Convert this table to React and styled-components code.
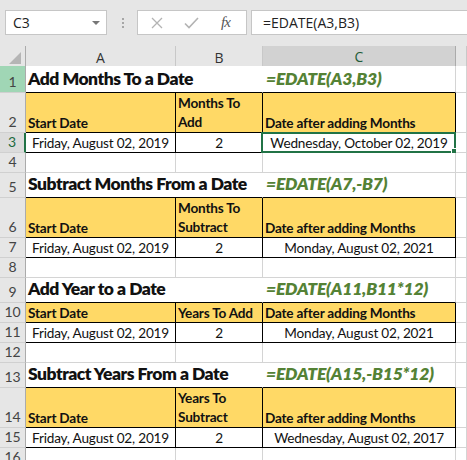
import React from 'react';
import styled, { createGlobalStyle } from 'styled-components';

const GlobalStyle = createGlobalStyle`
  html, body {
    margin: 0;
    padding: 0;
    background: #ffffff;
    overflow: hidden;
  }
`

const CELL_FONT = `Lato, "Open Sans", "Liberation Sans", sans-serif`;
const UI_FONT = `"Open Sans", "Noto Sans", "Liberation Sans", sans-serif`;
const GRID = '#d4d4d4';
const GREEN = '#217346';
const COLS = '26px 150px 87px 193px 1fr';

const Window = styled.div`
  width: 467px;
  height: 460px;
  overflow: hidden;
  background: #ffffff;
`

// formula bar
const Toolbar = styled.div`
  display: flex;
  align-items: center;
  height: 46px;
  padding-left: 5px;
  background: #e6e6e6;
  box-sizing: border-box;
  padding-bottom: 11px;
  padding-top: 10px;
`
const NameBox = styled.div`
  display: flex;
  align-items: center;
  justify-content: space-between;
  width: 102px;
  height: 25px;
  box-sizing: border-box;
  padding: 0 6px 0 7px;
  background: #fff;
  border: 1px solid #c6c6c6;
  font: 14px ${UI_FONT};
  color: #222;
`
const DropArrow = styled.span`
  width: 0;
  height: 0;
  border-left: 4px solid transparent;
  border-right: 4px solid transparent;
  border-top: 4px solid #777;
`
const Dots = styled.div`
  display: flex;
  flex-direction: column;
  gap: 2px;
  margin: 0 13px 0 15px;
  span {
    width: 2px;
    height: 2px;
    background: #a6a6a6;
  }
`
const ButtonBox = styled.div`
  display: flex;
  align-items: center;
  width: 110px;
  height: 25px;
  box-sizing: border-box;
  padding-left: 13px;
  gap: 21px;
  background: #fff;
  border: 1px solid #c6c6c6;
`
const Fx = styled.span`
  font: italic 15px "Liberation Serif", serif;
  color: #555;
  margin-left: 1px;
  letter-spacing: -1px;
`
const FormulaBox = styled.div`
  flex: 1;
  height: 25px;
  margin-left: 4px;
  box-sizing: border-box;
  padding-left: 11px;
  display: flex;
  align-items: center;
  background: #fff;
  border: 1px solid #c6c6c6;
  border-right: none;
  font: 14px ${UI_FONT};
  color: #222;
`

// sheet
const Row = styled.div`
  display: grid;
  grid-template-columns: ${COLS};
  height: ${p => p.$h}px;
`
const ColHead = styled.div`
  display: flex;
  align-items: center;
  justify-content: center;
  box-sizing: border-box;
  background: ${p => (p.$active ? '#d2d2d2' : '#e6e6e6')};
  border-right: 1px solid ${p => (p.$active ? '#ababab' : '#c8c8c8')};
  border-bottom: ${p => (p.$active ? `2px solid ${GREEN}` : '1px solid #ababab')};
  font: 14px ${UI_FONT};
  color: ${p => (p.$active ? '#1e5c38' : '#333')};
  padding-top: 1px;
`
const Corner = styled.div`
  display: flex;
  align-items: flex-end;
  justify-content: flex-end;
  box-sizing: border-box;
  padding: 0 4px 3px 0;
  background: #e6e6e6;
  border-right: 1px solid #ababab;
  border-bottom: 1px solid #ababab;
`
const RowHead = styled.div`
  display: flex;
  align-items: flex-end;
  justify-content: center;
  box-sizing: border-box;
  background: ${p => (p.$state === 'green' ? '#a0d6b5' : p.$state === 'active' ? '#dcdcdc' : '#e6e6e6')};
  border-right: ${p => (p.$state === 'active' ? `2px solid ${GREEN}` : '1px solid #ababab')};
  border-bottom: 1px solid #d0d0d0;
  font: 14px/18px ${CELL_FONT};
  color: ${p => (p.$state === 'active' ? '#1e6b3f' : '#444')};
  padding-bottom: 1px;
`
const Cell = styled.div`
  position: relative;
  display: flex;
  flex-direction: column;
  justify-content: flex-end;
  align-items: ${p => p.$align || 'flex-start'};
  grid-column: ${p => (p.$span ? `span ${p.$span}` : 'auto')};
  box-sizing: border-box;
  min-width: 0;
  white-space: nowrap;
  padding: 0 2px;
  background: ${p => p.$fill || '#fff'};
  border-right: 1px solid ${p => p.$edge || GRID};
  border-bottom: 1px solid ${p => p.$base || GRID};
  font: ${p => (p.$bold ? 700 : 400)} 13.6px/18px ${CELL_FONT};
  letter-spacing: -0.2px;
  color: #111;
  overflow: ${p => (p.$active ? 'visible' : 'hidden')};
`
const Title = styled.span`
  font-size: 17.5px;
  line-height: 22px;
  font-weight: 800;
  letter-spacing: -0.5px;
  padding-bottom: 2px;
`
const Formula = styled.span`
  font-size: 17.5px;
  line-height: 22px;
  font-weight: 800;
  font-style: italic;
  letter-spacing: -0.2px;
  color: #548235;
  padding: 0 0 2px 1px;
`
const HeadLine = styled.span`
  line-height: ${p => (p.$wrap ? 19 : 18)}px;
`
const ActiveFrame = styled.div`
  position: absolute;
  top: -1px;
  left: -2px;
  right: -1px;
  bottom: -1px;
  border: 2px solid ${GREEN};
  pointer-events: none;
  &::after {
    content: '';
    position: absolute;
    right: -4px;
    bottom: -4px;
    width: 5px;
    height: 5px;
    background: ${GREEN};
    border: 1px solid #fff;
  }
`

const sections = [
  {
    title: 'Add Months To a Date', formula: '=EDATE(A3,B3)', titleH: 27,
    headB: ['Months To', 'Add'], result: 'Wednesday, October 02, 2019', active: true,
  },
  {
    title: 'Subtract Months From a Date', formula: '=EDATE(A7,-B7)', titleH: 25,
    headB: ['Months To', 'Subtract'], result: 'Monday, August 02, 2021',
  },
  {
    title: 'Add Year to a Date', formula: '=EDATE(A11,B11*12)', titleH: 25,
    headB: ['Years To Add'], result: 'Monday, August 02, 2021',
  },
  {
    title: 'Subtract Years From a Date', formula: '=EDATE(A15,-B15*12)', titleH: 25,
    headB: ['Years To', 'Subtract'], result: 'Wednesday, August 02, 2017',
  },
];

const YELLOW = '#ffd966';
const BLACK = '#000';

function Section({ s, first }) {
  const wrap = s.headB.length > 1;
  const n = first;
  return (
    <>
      <Row $h={s.titleH}>
        <RowHead $state={n === 1 ? 'green' : undefined}>{n}</RowHead>
        <Cell $span={2} $edge="#fff" $base={BLACK}><Title>{s.title}</Title></Cell>
        <Cell $base={BLACK}><Formula>{s.formula}</Formula></Cell>
        <Cell />
      </Row>
      <Row $h={wrap ? 40 : 20}>
        <RowHead>{n + 1}</RowHead>
        <Cell $fill={YELLOW} $edge={BLACK} $base={BLACK} $bold><HeadLine>Start Date</HeadLine></Cell>
        <Cell $fill={YELLOW} $edge={BLACK} $base={BLACK} $bold>
          {s.headB.map(t => <HeadLine key={t} $wrap={wrap}>{t}</HeadLine>)}
        </Cell>
        <Cell $fill={YELLOW} $edge={BLACK} $base={BLACK} $bold><HeadLine>Date after adding Months</HeadLine></Cell>
        <Cell />
      </Row>
      <Row $h={20}>
        <RowHead $state={s.active ? 'active' : undefined}>{n + 2}</RowHead>
        <Cell $align="center" $edge={BLACK} $base={BLACK}>Friday, August 02, 2019</Cell>
        <Cell $align="center" $edge={BLACK} $base={BLACK}>2</Cell>
        <Cell $align="center" $edge={BLACK} $base={BLACK} $active={s.active}>
          {s.result}
          {s.active && <ActiveFrame />}
        </Cell>
        <Cell />
      </Row>
      <Row $h={20}>
        <RowHead>{n + 3}</RowHead>
        <Cell />
        <Cell />
        <Cell />
        <Cell />
      </Row>
    </>
  );
}

export default function App() {
  return (
    <Window>
      <GlobalStyle />
      <Toolbar>
        <NameBox>C3<DropArrow /></NameBox>
        <Dots><span /><span /><span /></Dots>
        <ButtonBox>
          <svg width="12" height="12" viewBox="0 0 12 12">
            <path d="M1 1L11 11M11 1L1 11" stroke="#b3b3b3" strokeWidth="1.3" fill="none" />
          </svg>
          <svg width="15" height="12" viewBox="0 0 15 12">
            <path d="M1 6.5L5 10.5L14 1" stroke="#b3b3b3" strokeWidth="1.6" fill="none" />
          </svg>
          <Fx>fx</Fx>
        </ButtonBox>
        <FormulaBox>=EDATE(A3,B3)</FormulaBox>
      </Toolbar>
      <Row $h={20}>
        <Corner>
          <svg width="12" height="12" viewBox="0 0 12 12">
            <polygon points="12,0 12,12 0,12" fill="#b5b5b5" />
          </svg>
        </Corner>
        <ColHead>A</ColHead>
        <ColHead>B</ColHead>
        <ColHead $active>C</ColHead>
        <ColHead />
      </Row>
      {sections.map((s, i) => (
        <Section key={s.title} s={s} first={i * 4 + 1} />
      ))}
    </Window>
  );
}
